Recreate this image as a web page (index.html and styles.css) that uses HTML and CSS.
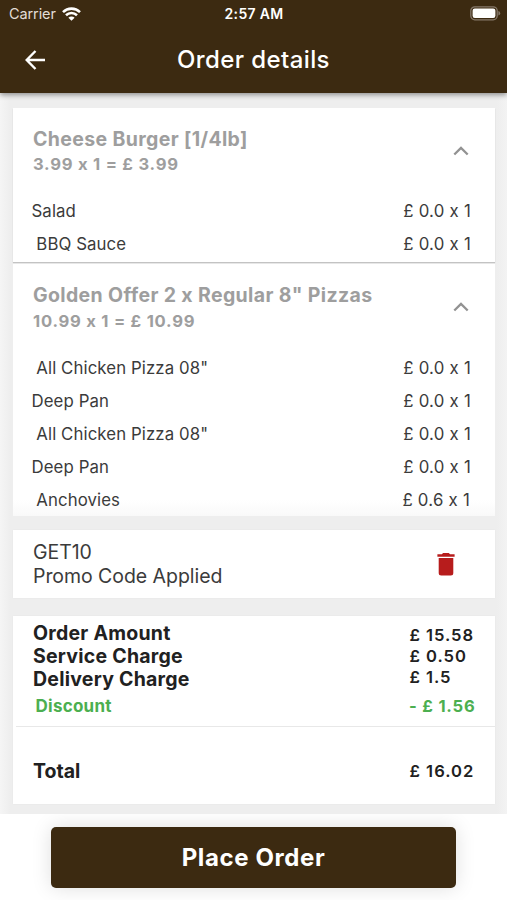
FILE: index.html
```html
<!DOCTYPE html>
<html lang="en">
<head>
<meta charset="utf-8">
<title>Order details</title>
<link rel="stylesheet" href="styles.css">
</head>
<body>
<header class="header">
  <div class="status">
    <div class="carrier"><span>Carrier</span>
      <svg class="wifi" width="19" height="14" viewBox="0 0 19 14" fill="none" stroke="#fff" stroke-width="2.6"><path d="M1 5.1a12.2 12.2 0 0 1 17 0M4 8.3a7.9 7.9 0 0 1 11 0"/><path d="M6.4 10.7a4.4 4.4 0 0 1 6.2 0L9.5 13.8z" fill="#fff" stroke="none"/></svg>
    </div>
    <div class="clock">2:57 AM</div>
    <svg class="battery" width="31" height="15" viewBox="0 0 31 15"><rect x=".8" y=".8" width="26.4" height="13" rx="4" fill="none" stroke="#85786a" stroke-width="1.3"/><rect x="2.6" y="2.6" width="22.8" height="9.4" rx="2.2" fill="#fff"/><path d="M28.4 5v4.6q1.8-.6 1.8-2.3T28.4 5z" fill="#85786a"/></svg>
  </div>
  <div class="appbar">
    <svg class="back" width="20" height="20" viewBox="0 0 20 20" fill="none" stroke="#fff" stroke-width="2.4"><path d="M20 10H2M10.5 1 1.7 10l8.8 9"/></svg>
    <h1 class="title">Order details</h1>
  </div>
</header>
<main class="content">
  <section class="card item">
    <div class="item-head">
      <div><h2 class="name burger">Cheese Burger [1/4lb]</h2><p class="calc">3.99 x 1 = £ 3.99</p></div>
      <svg class="chevron" width="16" height="10" viewBox="0 0 16 10"><path d="M1.3 8.5 8 1.9l6.7 6.6" fill="none" stroke="#929292" stroke-width="2.3"/></svg>
    </div>
    <div class="row"><span>Salad</span><span class="price">£ 0.0 x 1</span></div>
    <div class="row"><span class="indent">BBQ Sauce</span><span class="price">£ 0.0 x 1</span></div>
  </section>
  <section class="card item second">
    <div class="item-head">
      <div><h2 class="name">Golden Offer 2 x Regular 8" Pizzas</h2><p class="calc">10.99 x 1 = £ 10.99</p></div>
      <svg class="chevron" width="16" height="10" viewBox="0 0 16 10"><path d="M1.3 8.5 8 1.9l6.7 6.6" fill="none" stroke="#929292" stroke-width="2.3"/></svg>
    </div>
    <div class="row"><span class="indent">All Chicken Pizza 08"</span><span class="price">£ 0.0 x 1</span></div>
    <div class="row"><span>Deep Pan</span><span class="price">£ 0.0 x 1</span></div>
    <div class="row"><span class="indent">All Chicken Pizza 08"</span><span class="price">£ 0.0 x 1</span></div>
    <div class="row"><span>Deep Pan</span><span class="price">£ 0.0 x 1</span></div>
    <div class="row"><span class="indent">Anchovies</span><span class="price last">£ 0.6 x 1</span></div>
  </section>
  <section class="card promo">
    <div class="promo-text"><div>GET10</div><div>Promo Code Applied</div></div>
    <svg class="trash" width="18" height="23" viewBox="0 0 18 23" fill="#b71c1c"><path d="M.4 1.3h4.4L6.1 0h5.7l1.3 1.3h4.5v2.5H.4zM1.7 5.1h14.6v14.8q0 2.5-2.5 2.5H4.2q-2.5 0-2.5-2.5z"/></svg>
  </section>
  <section class="card totals">
    <div class="charges">
      <div class="labels"><div>Order Amount</div><div>Service Charge</div><div>Delivery Charge</div></div>
      <div class="amounts"><div>£ 15.58</div><div>£ 0.50</div><div>£ 1.5</div></div>
    </div>
    <div class="discount"><span>Discount</span><span class="value">- £ 1.56</span></div>
    <div class="total"><span class="total-label">Total</span><span class="value">£ 16.02</span></div>
  </section>
</main>
<footer class="footer"><button class="place">Place Order</button></footer>
</body>
</html>
```
FILE: styles.css
```css
* { box-sizing: border-box; }
body {
  margin: 0;
  height: 900px;
  overflow: hidden;
  display: flex;
  flex-direction: column;
  background: #fff;
  font-family: Inter, "Liberation Sans", sans-serif;
  color: #3b3b3b;
}
h1, h2, p { margin: 0; }
svg { display: block; flex: none; }

.header {
  height: 93px;
  flex: none;
  background: #3c2a11;
  color: #fff;
  box-shadow: 0 2px 5px rgba(0, 0, 0, .4);
  z-index: 1;
}
.status {
  height: 27px;
  padding: 0 6px 0 9px;
  display: grid;
  grid-template-columns: 1fr auto 1fr;
  align-items: center;
  font-size: 14.5px;
}
.carrier { display: flex; align-items: center; gap: 6px; color: #e2ddd6; letter-spacing: -.1px; }
.clock { font-weight: 600; font-size: 14px; letter-spacing: .3px; margin-right: 2px; }
.battery { justify-self: end; }
.appbar {
  height: 66px;
  padding: 0 25px;
  display: grid;
  grid-template-columns: 1fr auto 1fr;
  align-items: center;
}
.title { font-size: 24px; font-weight: 500; letter-spacing: .4px; line-height: 30px; }

.content {
  flex: none;
  height: 721px;
  padding: 15px 12px 0 13px;
  background: linear-gradient(90deg, #f5f5f5, #eee 10px, #eee 497px, #f3f3f3);
}
.card { background: #fff; box-shadow: 0 0 2px rgba(0, 0, 0, .04); }
.item { height: 154px; box-shadow: 0 1px 1px rgba(0, 0, 0, .18); }
.item.second {
  height: 252px;
  margin-top: 2px;
  box-shadow: none;
  background: linear-gradient(#fff 236px, #f9f9f9);
}
.item-head {
  height: 86px;
  padding: 18px 26.5px 0 20px;
  display: flex;
  justify-content: space-between;
  color: #9e9e9e;
}
.second .item-head { height: 87px; }
.name { font-size: 19.5px; line-height: 27px; font-weight: 700; letter-spacing: .36px; }
.calc { font-size: 16.6px; line-height: 24px; font-weight: 700; letter-spacing: .76px; }
.item:not(.second) .calc { line-height: 23px; }
.chevron { margin-top: 20px; }
.row {
  height: 33px;
  padding: 0 24px 0 18.5px;
  display: flex;
  align-items: center;
  justify-content: space-between;
  font-size: 16.8px;
  letter-spacing: .1px;
}
.indent { padding-left: 4.8px; }
.price { letter-spacing: .25px; }
.last { padding-right: 1px; }

.promo {
  height: 68px;
  margin-top: 14px;
  padding: 0 40px 0 20px;
  display: flex;
  align-items: center;
  justify-content: space-between;
}
.promo-text { font-size: 19.5px; line-height: 23.5px; letter-spacing: -.05px; padding-top: 1px; }

.totals { height: 188px; margin-top: 18px; color: #212121; font-weight: 700; }
.charges { height: 77px; padding: 6px 0 0 20px; display: grid; grid-template-columns: 376.5px 1fr; }
.labels { font-size: 19.5px; line-height: 23px; letter-spacing: .24px; }
.amounts { font-size: 16.6px; line-height: 21px; letter-spacing: .95px; padding-top: 3px; font-weight: 600; }
.discount {
  height: 34px;
  margin-left: 3px;
  padding-left: 19.5px;
  display: grid;
  grid-template-columns: 373.5px 1fr;
  line-height: 27px;
  font-size: 17px;
  letter-spacing: .25px;
  color: #4caf50;
  border-bottom: 1px solid #e8e8e8;
}
.value { font-size: 16.6px; letter-spacing: 1px; font-weight: 600; }
.discount .value { font-weight: 700; letter-spacing: .8px; }
.total { height: 87px; padding-left: 20px; display: grid; grid-template-columns: 376.5px 1fr; align-items: center; }
.total-label { font-size: 19.5px; }

.footer { height: 86px; padding: 13px 51px 12px; background: #fff; overflow: hidden; }
.place {
  display: block;
  width: 405px;
  height: 61px;
  border: 0;
  border-radius: 5px;
  background: #3c2a11;
  color: #fff;
  font: 700 24px/30px Inter, "Liberation Sans", sans-serif;
  letter-spacing: .6px;
  box-shadow: 0 0 20px rgba(0, 0, 0, .13);
}
```
